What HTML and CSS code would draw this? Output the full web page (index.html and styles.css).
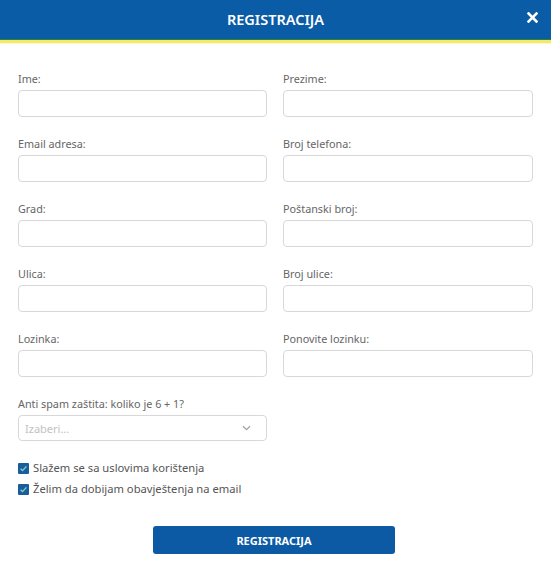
FILE: index.html
```html
<!DOCTYPE html>
<html lang="bs">
<head>
<meta charset="utf-8">
<title>Registracija</title>
<link rel="stylesheet" href="styles.css">
</head>
<body>
<div class="modal">
  <header class="modal-header">
    <h1 class="modal-title">REGISTRACIJA</h1>
    <svg class="modal-close" width="11" height="11" viewBox="0 0 11 11"><path d="M1.5 1.5 L9.5 9.5 M9.5 1.5 L1.5 9.5" stroke="#fff" stroke-width="2.6" stroke-linecap="square"/></svg>
  </header>
  <form class="form">
    <div class="grid">
      <div class="field"><label class="label">Ime:</label><div class="input"></div></div>
      <div class="field"><label class="label">Prezime:</label><div class="input"></div></div>
      <div class="field"><label class="label">Email adresa:</label><div class="input"></div></div>
      <div class="field"><label class="label">Broj telefona:</label><div class="input"></div></div>
      <div class="field"><label class="label">Grad:</label><div class="input"></div></div>
      <div class="field"><label class="label">Poštanski broj:</label><div class="input"></div></div>
      <div class="field"><label class="label">Ulica:</label><div class="input"></div></div>
      <div class="field"><label class="label">Broj ulice:</label><div class="input"></div></div>
      <div class="field"><label class="label">Lozinka:</label><div class="input"></div></div>
      <div class="field"><label class="label">Ponovite lozinku:</label><div class="input"></div></div>
      <div class="field"><label class="label">Anti spam zaštita: koliko je 6 + 1?</label>
        <div class="input select"><span class="placeholder">Izaberi...</span>
          <svg class="chev" width="9" height="6" viewBox="0 0 9 6"><path d="M1 1.2 L4.5 4.6 L8 1.2" fill="none" stroke="#a0a0a0" stroke-width="1.2"/></svg>
        </div>
      </div>
    </div>
    <div class="checks">
      <div class="check"><span class="box"><svg width="9" height="9" viewBox="0 0 9 9"><path d="M1.6 4.8 L3.6 6.6 L7.4 2.4" fill="none" stroke="#7fd0c0" stroke-width="1.4"/></svg></span>Slažem se sa uslovima korištenja</div>
      <div class="check"><span class="box"><svg width="9" height="9" viewBox="0 0 9 9"><path d="M1.6 4.8 L3.6 6.6 L7.4 2.4" fill="none" stroke="#7fd0c0" stroke-width="1.4"/></svg></span>Želim da dobijam obavještenja na email</div>
    </div>
    <div class="actions"><button type="button" class="btn">REGISTRACIJA</button></div>
  </form>
</div>
</body>
</html>
```
FILE: styles.css
```css
* { box-sizing: border-box; }
html, body { margin: 0; padding: 0; background: #fff; }
body { font-family: "Noto Sans", "DejaVu Sans", sans-serif; color: #555; }
.modal { width: 551px; }
.modal-header {
  height: 44px;
  background: #0b5ca6;
  border-bottom: 1px solid #fbf7c8;
  box-shadow: inset 0 -3px 0 #f2ea6a, inset 0 -4px 0 #2e7f3c;
  display: flex;
  align-items: center;
  justify-content: center;
  position: relative;
  padding-bottom: 6px;
}
.modal-title {
  margin: 0;
  font-size: 14.5px;
  font-weight: 600;
  color: #fff;
}
.modal-close {
  position: absolute;
  right: 13px;
  top: 12px;
}
.form { padding: 28px 18px 0 18px; }
.grid {
  display: grid;
  grid-template-columns: 249px 250px;
  column-gap: 16px;
  row-gap: 20px;
}
.field { display: flex; flex-direction: column; }
.label {
  font-size: 10.8px;
  line-height: 14px;
  color: #666;
  margin-bottom: 4px;
}
.input {
  height: 27px;
  border: 1px solid #d8d8d8;
  border-radius: 4px;
  background: #fff;
}
.select {
  display: flex;
  align-items: center;
  justify-content: space-between;
  padding: 0 15px 0 6px;
  height: 26px;
}
.placeholder { font-size: 11px; color: #c2c2c2; }
.checks { margin-top: 20px; display: flex; flex-direction: column; gap: 7px; }
.check { display: flex; align-items: center; font-size: 11.2px; line-height: 14px; color: #555; }
.box {
  width: 11px; height: 11px;
  background: #1a5d9d;
  border-radius: 1px;
  margin-right: 4px;
  display: flex; align-items: center; justify-content: center;
}
.actions { display: flex; justify-content: center; margin-top: 30px; }
.btn {
  width: 242px; height: 28px;
  margin-left: -3px;
  background: #0b5aa3;
  color: #fff;
  border: none;
  border-radius: 3px;
  font-family: "Noto Sans", sans-serif;
  font-size: 11px;
  font-weight: 700;
}
```
